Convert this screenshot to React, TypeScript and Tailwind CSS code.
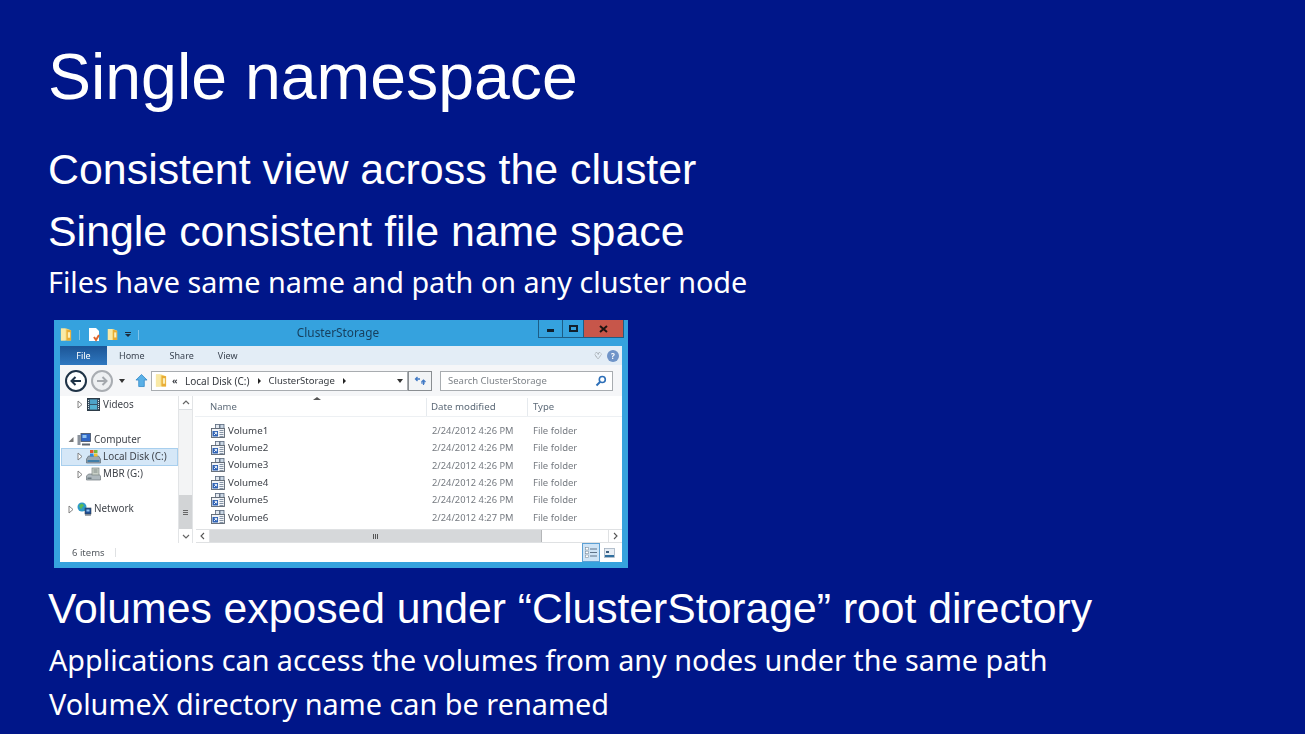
import React from 'react';

const FolderIcon: React.FC<{ w?: number; h?: number }> = ({ w = 13, h = 15 }) => (
  <svg width={w} height={h} viewBox="0 0 13 15" className="shrink-0">
    <path d="M1 1h6l5 2v11H1z" fill="#f6dc80" />
    <path d="M7 2l5 1v11H7z" fill="#e9ad35" />
    <path d="M1 1h5v13H1z" fill="#f9e9a6" />
    <path d="M8.5 5H11v6H8.5z" fill="#fbeeb8" />
  </svg>
);

const VolumeIcon = () => (
  <svg width={14} height={14} viewBox="0 0 14 14" className="shrink-0">
    <rect x="4.5" y="0.5" width="4" height="4" fill="#e3e9f0" stroke="#59687c" strokeWidth="0.8" />
    <rect x="9" y="0.5" width="4" height="4" fill="#c9d6e4" stroke="#59687c" strokeWidth="0.8" />
    <rect x="0.5" y="4.5" width="13" height="9" fill="#f1f3f6" stroke="#5b6470" strokeWidth="0.9" />
    <rect x="1.5" y="7" width="5.5" height="5.5" fill="#2f62b4" />
    <path d="M3 11l2.5-2.5M3.6 8.4h2v2" stroke="#fff" strokeWidth="0.9" fill="none" />
    <path d="M8.5 6.5h4M8.5 8.5h4M8.5 10.5h4M8.5 12.5h4" stroke="#77889c" strokeWidth="0.9" />
  </svg>
);

const Expander: React.FC<{ open?: boolean }> = ({ open }) => (
  <svg width={6} height={9} viewBox="0 0 6 9" className="shrink-0">
    {open ? (
      <path d="M5.5 2v5h-5z" fill="#777" />
    ) : (
      <path d="M1 1l4 3.5L1 8z" fill="#fff" stroke="#777" strokeWidth="0.9" />
    )}
  </svg>
);

const VideosIcon = () => (
  <svg width={13} height={13} viewBox="0 0 13 13" className="shrink-0">
    <rect x="0.5" y="0.5" width="12" height="12" fill="#39566b" stroke="#2d3b47" />
    <rect x="3" y="1.5" width="7" height="4.5" fill="#4ea3c8" />
    <rect x="3" y="7" width="7" height="4.5" fill="#56b3d3" />
    <path d="M1.5 2v9M11.5 2v9" stroke="#d7dfe4" strokeWidth="1" strokeDasharray="1 1" />
  </svg>
);

const ComputerIcon = () => (
  <svg width={14} height={13} viewBox="0 0 14 13" className="shrink-0">
    <rect x="0.5" y="2" width="3" height="10" fill="#8a929c" />
    <rect x="4" y="0.5" width="9.5" height="8" fill="#2f66c6" stroke="#47525f" strokeWidth="0.8" />
    <rect x="5.5" y="2" width="4" height="3" fill="#8fc3f0" />
    <path d="M5 11.5h8" stroke="#5e6771" strokeWidth="2" />
  </svg>
);

const DiskCIcon = () => (
  <svg width={15} height={15} viewBox="0 0 15 15" className="shrink-0">
    <path d="M0.5 10l2-3h10l2 3v4h-14z" fill="#9aa7b2" stroke="#5f6b76" strokeWidth="0.7" />
    <rect x="1.5" y="11" width="12" height="2" fill="#3f7da8" />
    <rect x="4" y="1" width="3.5" height="3" fill="#e1582c" />
    <rect x="8" y="1" width="3.5" height="3" fill="#79b83a" />
    <rect x="4" y="4.5" width="3.5" height="3" fill="#2f8ad8" />
    <rect x="8" y="4.5" width="3.5" height="3" fill="#f2c230" />
  </svg>
);

const DiskGIcon = () => (
  <svg width={15} height={14} viewBox="0 0 15 14" className="shrink-0">
    <path d="M0.5 9l2-2h10l2 2v4h-14z" fill="#aeb8bd" stroke="#6d777d" strokeWidth="0.7" />
    <rect x="6" y="1" width="7" height="7" fill="#c9d0c8" stroke="#7c8683" strokeWidth="0.7" />
    <path d="M7.5 3h4M7.5 5h4" stroke="#6e7a76" strokeWidth="0.8" />
    <rect x="1.5" y="10.5" width="4" height="1.5" fill="#6b7980" />
  </svg>
);

const NetworkIcon = () => (
  <svg width={15} height={14} viewBox="0 0 15 14" className="shrink-0">
    <circle cx="5" cy="5" r="4.5" fill="#2c9ac9" />
    <path d="M2 3.5l3-2 2 2-2 2-1 2z" fill="#5dbb53" />
    <rect x="8" y="6" width="6" height="6" fill="#1f4f96" stroke="#33414e" strokeWidth="0.6" />
    <rect x="9.5" y="7.5" width="3" height="2" fill="#8fc3f0" />
    <path d="M8 13h6" stroke="#4b5561" strokeWidth="1" />
  </svg>
);

const NavRow: React.FC<{
  label: string;
  icon: React.ReactNode;
  indent?: boolean;
  open?: boolean;
  selected?: boolean;
}> = ({ label, icon, indent, open, selected }) => (
  <div
    className={`h-[17.4px] ml-px flex items-center border text-[9.9px] ${
      selected ? 'bg-[#d5e7f7] border-[#a8cfee]' : 'border-transparent'
    } ${indent ? 'pl-[15px]' : 'pl-[6px]'}`}
  >
    <Expander open={open} />
    <span className="ml-[2px] w-[16px] flex justify-center">{icon}</span>
    <span className="ml-[2px] text-[#3f434a]">{label}</span>
  </div>
);

const files = [
  { name: 'Volume1', date: '2/24/2012 4:26 PM' },
  { name: 'Volume2', date: '2/24/2012 4:26 PM' },
  { name: 'Volume3', date: '2/24/2012 4:26 PM' },
  { name: 'Volume4', date: '2/24/2012 4:26 PM' },
  { name: 'Volume5', date: '2/24/2012 4:26 PM' },
  { name: 'Volume6', date: '2/24/2012 4:27 PM' },
];

const ExplorerWindow = () => (
  <div className="ml-[6px] mt-[18px] w-[574px] h-[248px] shrink-0 bg-[#35a2de] flex flex-col blur-[0.4px] font-['Noto_Sans',sans-serif] text-[9.5px] leading-none">
    {/* Title bar */}
    <div className="h-[26px] shrink-0 flex items-start">
      <div className="flex items-center pl-[6px] pt-[3px] h-[26px] w-[90px]">
        <FolderIcon w={12} h={15} />
        <span className="w-px h-[10px] bg-[#7fc4ea] ml-[7px]" />
        <svg width={12} height={15} viewBox="0 0 12 15" className="ml-[8px] shrink-0">
          <path d="M1 1h7l3 3v10H1z" fill="#fff" />
          <path d="M6 10l2 3 3-5" stroke="#e0662d" strokeWidth="2" fill="none" />
        </svg>
        <span className="ml-[7px]"><FolderIcon w={11} h={15} /></span>
        <span className="ml-[7px] flex flex-col items-center gap-[1px]">
          <span className="w-[6px] h-px bg-[#1c2a3a]" />
          <span className="w-0 h-0 border-x-[3px] border-x-transparent border-t-[3px] border-t-[#1c2a3a]" />
        </span>
        <span className="w-px h-[10px] bg-[#7fc4ea] ml-[7px]" />
      </div>
      <div className="flex-1 text-center pt-[7px] text-[11.8px] text-[#17405f] pr-[6px]">ClusterStorage</div>
      <div className="flex h-[18px] mr-[4px] border border-t-0 border-[#1d5d86]">
        <div className="w-[24px] flex items-center justify-center border-r border-[#1d5d86]">
          <span className="w-[7px] h-[3px] bg-[#12202c] mt-[3px]" />
        </div>
        <div className="w-[21px] flex items-center justify-center border-r border-[#1d5d86]">
          <span className="w-[9px] h-[7px] border-2 border-[#12202c]" />
        </div>
        <div className="w-[39px] flex items-center justify-center bg-[#c7564a]">
          <svg width={9} height={8} viewBox="0 0 9 8"><path d="M1 1l7 6M8 1L1 7" stroke="#1d1512" strokeWidth="2" /></svg>
        </div>
      </div>
    </div>

    <div className="mx-[6px] mb-[6px] flex-1 min-h-0 flex flex-col bg-white">
      {/* Ribbon tabs */}
      <div className="h-[19px] shrink-0 bg-[#e3edf6] flex items-center text-[#3a4350] text-[9px]">
        <div className="w-[47px] h-full bg-gradient-to-b from-[#1c5596] to-[#2f78c0] text-white flex items-center justify-center">File</div>
        <span className="ml-[12px]">Home</span>
        <span className="ml-[25px]">Share</span>
        <span className="ml-[24px]">View</span>
        <span className="ml-auto text-[9px] text-[#444] mr-[5px]">♡</span>
        <span className="mr-[3px] w-[12px] h-[12px] rounded-full bg-[#6f94c8] flex items-center justify-center text-white text-[8px] font-bold">?</span>
      </div>

      {/* Address bar */}
      <div className="h-[31px] shrink-0 bg-[#f5f6f8] flex items-center pl-[5px]">
        <span className="w-[22px] h-[22px] shrink-0 rounded-full border-2 border-[#1e3246] bg-white flex items-center justify-center">
          <svg width={12} height={10} viewBox="0 0 12 10"><path d="M11 5H2M5.5 1L1.5 5l4 4" stroke="#1e3246" strokeWidth="2" fill="none" /></svg>
        </span>
        <span className="ml-[4px] w-[22px] h-[22px] shrink-0 rounded-full border-2 border-[#a9adb2] bg-[#eef0f2] flex items-center justify-center">
          <svg width={12} height={10} viewBox="0 0 12 10"><path d="M1 5h9M6.5 1l4 4-4 4" stroke="#a4a8ad" strokeWidth="2" fill="none" /></svg>
        </span>
        <span className="ml-[6px] w-0 h-0 border-x-[3.5px] border-x-transparent border-t-[4px] border-t-[#333]" />
        <svg width={13} height={15} viewBox="0 0 14 15" className="ml-[10px] shrink-0">
          <path d="M7 1l6 6H10v7H4V7H1z" fill="#5ab0e6" stroke="#2d86c6" strokeWidth="0.8" />
        </svg>
        <div className="ml-[3px] w-[257px] h-[20px] bg-white border border-[#a8acb0] flex items-center text-[#34383e]">
          <span className="ml-[3px]"><FolderIcon w={12} h={15} /></span>
          <span className="ml-[5px] w-[6px] text-[9px] font-bold">«</span>
          <span className="ml-[7px] text-[10px]">Local Disk (C:)</span>
          <span className="ml-[8px] w-0 h-0 border-y-[3px] border-y-transparent border-l-[3.5px] border-l-[#222]" />
          <span className="ml-[8px]">ClusterStorage</span>
          <span className="ml-[8px] w-0 h-0 border-y-[3px] border-y-transparent border-l-[3.5px] border-l-[#222]" />
          <span className="ml-auto mr-[4px] w-0 h-0 border-x-[3.5px] border-x-transparent border-t-[4px] border-t-[#333]" />
        </div>
        <div className="w-[24px] h-[20px] bg-[#f2f4f6] border border-[#8a8e92] flex items-center justify-center">
          <svg width={13} height={10} viewBox="0 0 13 10">
            <path d="M6 3H1.5M3.5 1L1.5 3l2 2" stroke="#3f78c4" strokeWidth="1.3" fill="none" />
            <path d="M7 7h4M9.5 9V4M7.5 6l2-2 2 2" stroke="#3f78c4" strokeWidth="1.2" fill="none" />
          </svg>
        </div>
        <div className="ml-[8px] w-[173px] h-[20px] bg-white border border-[#a8acb0] flex items-center pl-[7px] text-[#7d8288]">
          <span>Search ClusterStorage</span>
          <svg width={12} height={12} viewBox="0 0 12 12" className="ml-auto mr-[5px]">
            <circle cx="7.3" cy="4.5" r="3" fill="none" stroke="#2d6fb8" strokeWidth="1.6" />
            <path d="M5 7l-3.5 3.5" stroke="#2d6fb8" strokeWidth="2" />
          </svg>
        </div>
      </div>

      {/* Panes */}
      <div className="h-[147px] shrink-0 flex">
        {/* Navigation */}
        <div className="w-[118px] shrink-0">
          <NavRow label="Videos" icon={<VideosIcon />} indent />
          <div className="h-[17.4px]" />
          <NavRow label="Computer" icon={<ComputerIcon />} open />
          <NavRow label="Local Disk (C:)" icon={<DiskCIcon />} indent selected />
          <NavRow label="MBR (G:)" icon={<DiskGIcon />} indent />
          <div className="h-[17.4px]" />
          <NavRow label="Network" icon={<NetworkIcon />} />
        </div>

        {/* Navigation scrollbar */}
        <div className="w-[15px] shrink-0 bg-[#f3f4f5] border-x border-[#e2e4e6] flex flex-col">
          <div className="h-[14px] bg-white flex items-center justify-center border-b border-[#dcdfe2]">
            <svg width={8} height={5} viewBox="0 0 8 5"><path d="M1 4l3-3 3 3" stroke="#666" fill="none" strokeWidth="1.2" /></svg>
          </div>
          <div className="flex-1" />
          <div className="h-[34px] bg-[#d2d4d6] flex flex-col items-center justify-center gap-[1px]">
            <span className="w-[5px] h-px bg-[#666]" />
            <span className="w-[5px] h-px bg-[#666]" />
            <span className="w-[5px] h-px bg-[#666]" />
          </div>
          <div className="h-[14px] bg-white flex items-center justify-center">
            <svg width={8} height={5} viewBox="0 0 8 5"><path d="M1 1l3 3 3-3" stroke="#666" fill="none" strokeWidth="1.2" /></svg>
          </div>
        </div>

        {/* File list */}
        <div className="flex-1 min-w-0 ml-[2px] flex flex-col">
          <div className="h-[21px] pt-[2px] shrink-0 flex items-center text-[#5d6a78] border-b border-[#edf0f3]">
            <div className="w-[232px] h-full relative border-r border-[#e6eaee] flex items-center pl-[15px]">
              Name
              <span className="absolute left-[118px] top-[-1px] w-0 h-0 border-x-[4px] border-x-transparent border-b-[3px] border-b-[#555]" />
            </div>
            <div className="w-[101px] h-full border-r border-[#e6eaee] flex items-center pl-[4px] text-[9.7px]">Date modified</div>
            <div className="pl-[5px]">Type</div>
          </div>
          <div className="flex-1 min-h-0 pt-[5px]">
            {files.map((file) => (
              <div key={file.name} className="h-[17.35px] flex items-center">
                <div className="w-[232px] pl-[16px] flex items-center gap-[3px] text-[9.75px] text-[#3f434a]">
                  <VolumeIcon />
                  {file.name}
                </div>
                <div className="w-[101px] pl-[5px] text-[9.3px] text-[#757a80] whitespace-nowrap">{file.date}</div>
                <div className="pl-[5px] text-[#757a80]">File folder</div>
              </div>
            ))}
          </div>

          {/* Horizontal scrollbar */}
          <div className="h-[14px] shrink-0 ml-px flex border-y border-[#dfe1e3]">
            <div className="w-[14px] flex items-center justify-center border-r border-[#dfe1e3]">
              <svg width={5} height={8} viewBox="0 0 5 8"><path d="M4 1L1 4l3 3" stroke="#555" fill="none" strokeWidth="1.1" /></svg>
            </div>
            <div className="w-[332px] bg-[#d6d8da] flex items-center justify-center gap-px border-r border-[#b4b6b8]">
              <span className="w-px h-[5px] bg-[#555]" />
              <span className="w-px h-[5px] bg-[#555]" />
              <span className="w-px h-[5px] bg-[#555]" />
            </div>
            <div className="flex-1" />
            <div className="w-[14px] flex items-center justify-center border-l border-[#dfe1e3]">
              <svg width={5} height={8} viewBox="0 0 5 8"><path d="M1 1l3 3-3 3" stroke="#555" fill="none" strokeWidth="1.1" /></svg>
            </div>
          </div>
        </div>
      </div>

      {/* Status bar */}
      <div className="flex-1 min-h-0 flex items-center pl-[12px] text-[#555a60]">
        <span>6 items</span>
        <span className="ml-[10px] w-px h-[9px] bg-[#dfe1e3]" />
        <div className="ml-auto mr-[7px] flex items-center gap-[4px]">
          <span className="w-[18px] h-[19px] bg-[#cfe4f6] border border-[#5ca0d4] flex items-center justify-center">
            <svg width={12} height={11} viewBox="0 0 12 11">
              <rect x="0.5" y="0.5" width="3" height="2.5" fill="#fff" stroke="#7f8f9f" strokeWidth="0.6" />
              <rect x="0.5" y="4.2" width="3" height="2.5" fill="#fff" stroke="#7f8f9f" strokeWidth="0.6" />
              <rect x="0.5" y="8" width="3" height="2.5" fill="#fff" stroke="#7f8f9f" strokeWidth="0.6" />
              <path d="M5 2h7M5 5.5h7M5 9h7" stroke="#5f7388" strokeWidth="1" />
            </svg>
          </span>
          <svg width={11} height={10} viewBox="0 0 11 10">
            <rect x="0.5" y="0.5" width="10" height="9" fill="#e7eef5" stroke="#98a8b8" strokeWidth="0.7" />
            <path d="M1 7h9v2H1z" fill="#2f6f9f" />
            <path d="M2 3h3v2H2z" fill="#3f5f7f" />
          </svg>
        </div>
      </div>
    </div>
  </div>
);

export default function App() {
  return (
    <div className="w-[1305px] h-[734px] overflow-hidden bg-[#001689] text-white pl-[48px] flex flex-col items-start font-['Liberation_Sans',Arial,sans-serif]">
      <h1 className="mt-[40px] text-[64.4px] leading-[75px] whitespace-nowrap">Single namespace</h1>
      <p className="mt-[23px] text-[42.9px] leading-[62px] whitespace-nowrap">Consistent view across the cluster</p>
      <p className="text-[42.9px] leading-[62px] whitespace-nowrap">Single consistent file name space</p>
      <p className="font-['Noto_Sans',sans-serif] text-[28.75px] leading-[40px] whitespace-nowrap">Files have same name and path on any cluster node</p>
      <ExplorerWindow />
      <p className="mt-[10px] text-[42.7px] leading-[60px] whitespace-nowrap">Volumes exposed under “ClusterStorage” root directory</p>
      <p className="ml-px font-['Noto_Sans',sans-serif] text-[28.75px] leading-[44px] whitespace-nowrap">Applications can access the volumes from any nodes under the same path</p>
      <p className="ml-px font-['Noto_Sans',sans-serif] text-[28.85px] leading-[44px] whitespace-nowrap">VolumeX directory name can be renamed</p>
    </div>
  );
}
